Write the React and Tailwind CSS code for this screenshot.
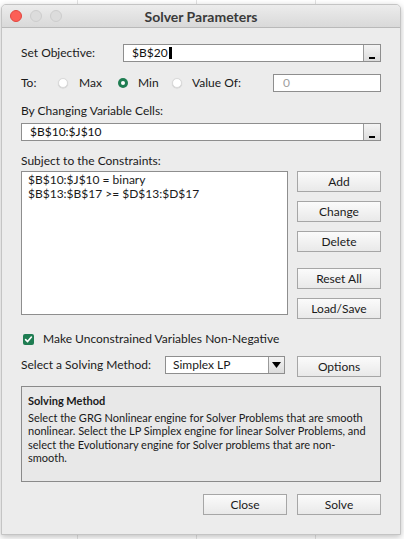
import React from "react";

const font = { fontFamily: 'Lato, "Liberation Sans", Arial, sans-serif' };

function Btn({ children, className = "" }) {
  return (
    <div
      className={
        "flex items-center justify-center h-[21px] border border-[#a6a6a6] bg-gradient-to-b from-[#fbfbfb] to-[#e9e9e9] text-[12px] text-[#1a1a1a] " +
        className
      }
    >
      {children}
    </div>
  );
}

function RefInput({ children }) {
  return (
    <div className="flex h-[18px] border border-[#8e8e8e] bg-white">
      <div className="flex flex-1 items-center pl-[8px] text-[12px] text-[#111]">{children}</div>
      <div className="relative w-[17px] border-l border-[#9a9a9a] bg-gradient-to-b from-[#f4f4f4] to-[#dcdcdc]">
        <div className="absolute left-[5px] bottom-[2px] h-[2px] w-[6px] bg-black" />
      </div>
    </div>
  );
}

function Radio({ checked }) {
  return checked ? (
    <div className="flex h-[10px] w-[10px] shrink-0 items-center justify-center rounded-full bg-[#1f7d52]">
      <div className="h-[4px] w-[4px] rounded-full bg-white" />
    </div>
  ) : (
    <div className="h-[10px] w-[10px] shrink-0 rounded-full border border-[#dadada] bg-white shadow-[0_0.5px_1px_rgba(0,0,0,0.15)]" />
  );
}

export default function App() {
  return (
    <div
      className="relative h-[539px] w-[404px] overflow-hidden bg-white pl-[1px] pt-[4px]"
      style={font}
    >
      <div className="pointer-events-none absolute left-[77px] top-0 h-full w-px bg-[#e2e2e2]" />
      <div className="pointer-events-none absolute left-[196px] top-0 h-full w-px bg-[#e2e2e2]" />
      <div className="pointer-events-none absolute left-[315px] top-0 h-full w-px bg-[#e2e2e2]" />
      <div className="relative flex h-[531px] w-[400px] flex-col overflow-hidden rounded-t-[5px] border border-[#c4c4c4] bg-[#ececec] shadow-[0_2px_6px_rgba(0,0,0,0.25)]">
        {/* title bar */}
        <div className="relative flex h-[23px] items-center border-b border-[#b9b9b9] bg-gradient-to-b from-[#ececec] to-[#d9d9d9]">
          <div className="ml-[8px] flex gap-[8px]">
            <div className="h-[12px] w-[12px] rounded-full border border-[#e2463f] bg-[#fc5f57]" />
            <div className="h-[12px] w-[12px] rounded-full border border-[#cdcdcd] bg-[#dcdcdc]" />
            <div className="h-[12px] w-[12px] rounded-full border border-[#cdcdcd] bg-[#dcdcdc]" />
          </div>
          <div className="absolute inset-0 flex items-center justify-center text-[14px] font-bold text-[#3a3a3a]">
            Solver Parameters
          </div>
        </div>

        <div className="flex flex-col pl-[19px] pr-[19px] text-[12px] text-[#1a1a1a]">
          {/* set objective */}
          <div className="mt-[16px] flex items-center">
            <div className="w-[102px] shrink-0">Set Objective:</div>
            <div className="flex-1">
              <RefInput>
                <span>$B$20</span>
                <span className="ml-[1px] inline-block h-[12px] w-[3px] bg-black" />
              </RefInput>
            </div>
          </div>

          {/* to row */}
          <div className="mt-[12px] flex h-[18px] items-center">
            <div className="w-[37px] shrink-0">To:</div>
            <Radio />
            <div className="ml-[11px] w-[39px] shrink-0">Max</div>
            <Radio checked />
            <div className="ml-[10px] w-[34px] shrink-0">Min</div>
            <Radio />
            <div className="ml-[10px] w-[81px] shrink-0">Value Of:</div>
            <div className="flex h-[18px] flex-1 items-center border border-[#8e8e8e] bg-white pl-[9px] text-[#a0a0a0]">
              0
            </div>
          </div>

          <div className="mt-[12px] flex h-[14px] items-center">By Changing Variable Cells:</div>
          <div className="mt-[5px]">
            <RefInput>$B$10:$J$10</RefInput>
          </div>

          <div className="mt-[13px] flex h-[14px] items-center">Subject to the Constraints:</div>

          <div className="mt-[3px] flex">
            <div className="h-[144px] w-[267px] border border-[#8e8e8e] bg-white px-[6px] pt-[1px] leading-[13.5px]">
              <div>$B$10:$J$10 = binary</div>
              <div>$B$13:$B$17 &gt;= $D$13:$D$17</div>
            </div>
            <div className="ml-[9px] flex flex-1 flex-col">
              <Btn>Add</Btn>
              <Btn className="mt-[9px]">Change</Btn>
              <Btn className="mt-[9px]">Delete</Btn>
              <Btn className="mt-[16px]">Reset All</Btn>
              <Btn className="mt-[9px]">Load/Save</Btn>
            </div>
          </div>

          {/* checkbox */}
          <div className="mt-[13px] flex h-[14px] items-center">
            <div className="ml-[2px] flex h-[11px] w-[11px] items-center justify-center rounded-[2px] bg-[#1f7d52]">
              <svg width="9" height="9" viewBox="0 0 9 9">
                <path d="M1.6 4.6 L3.6 6.6 L7.4 2" fill="none" stroke="white" strokeWidth="1.6" strokeLinecap="round" strokeLinejoin="round" />
              </svg>
            </div>
            <div className="ml-[9px]">Make Unconstrained Variables Non-Negative</div>
          </div>

          {/* solving method */}
          <div className="mt-[10px] flex items-start">
            <div className="flex h-[18px] w-[144px] items-center">Select a Solving Method:</div>
            <div className="flex h-[18px] w-[120px] border border-[#8e8e8e] bg-white">
              <div className="flex flex-1 items-center pl-[7px]">Simplex LP</div>
              <div className="flex w-[16px] items-center justify-center border-l border-[#9a9a9a] bg-gradient-to-b from-[#f4f4f4] to-[#dcdcdc]">
                <svg width="9" height="6" viewBox="0 0 9 6">
                  <path d="M0 0 H9 L4.5 6 Z" fill="black" />
                </svg>
              </div>
            </div>
            <div className="ml-[12px] flex-1">
              <Btn>Options</Btn>
            </div>
          </div>

          <div className="mt-[9px] h-[96px] border border-[#8a8a8a] bg-[#e8e8e8] px-[6px] pt-[7px] text-[11px] leading-[13.6px]">
            <div className="font-bold">Solving Method</div>
            <div className="mt-[3px]">
              Select the GRG Nonlinear engine for Solver Problems that are smooth nonlinear. Select the LP Simplex engine for linear Solver Problems, and select the Evolutionary engine for Solver problems that are non-smooth.
            </div>
          </div>

          <div className="mt-[12px] flex justify-end gap-[10px]">
            <Btn className="w-[84px]">Close</Btn>
            <Btn className="w-[84px]">Solve</Btn>
          </div>
        </div>
      </div>
    </div>
  );
}
